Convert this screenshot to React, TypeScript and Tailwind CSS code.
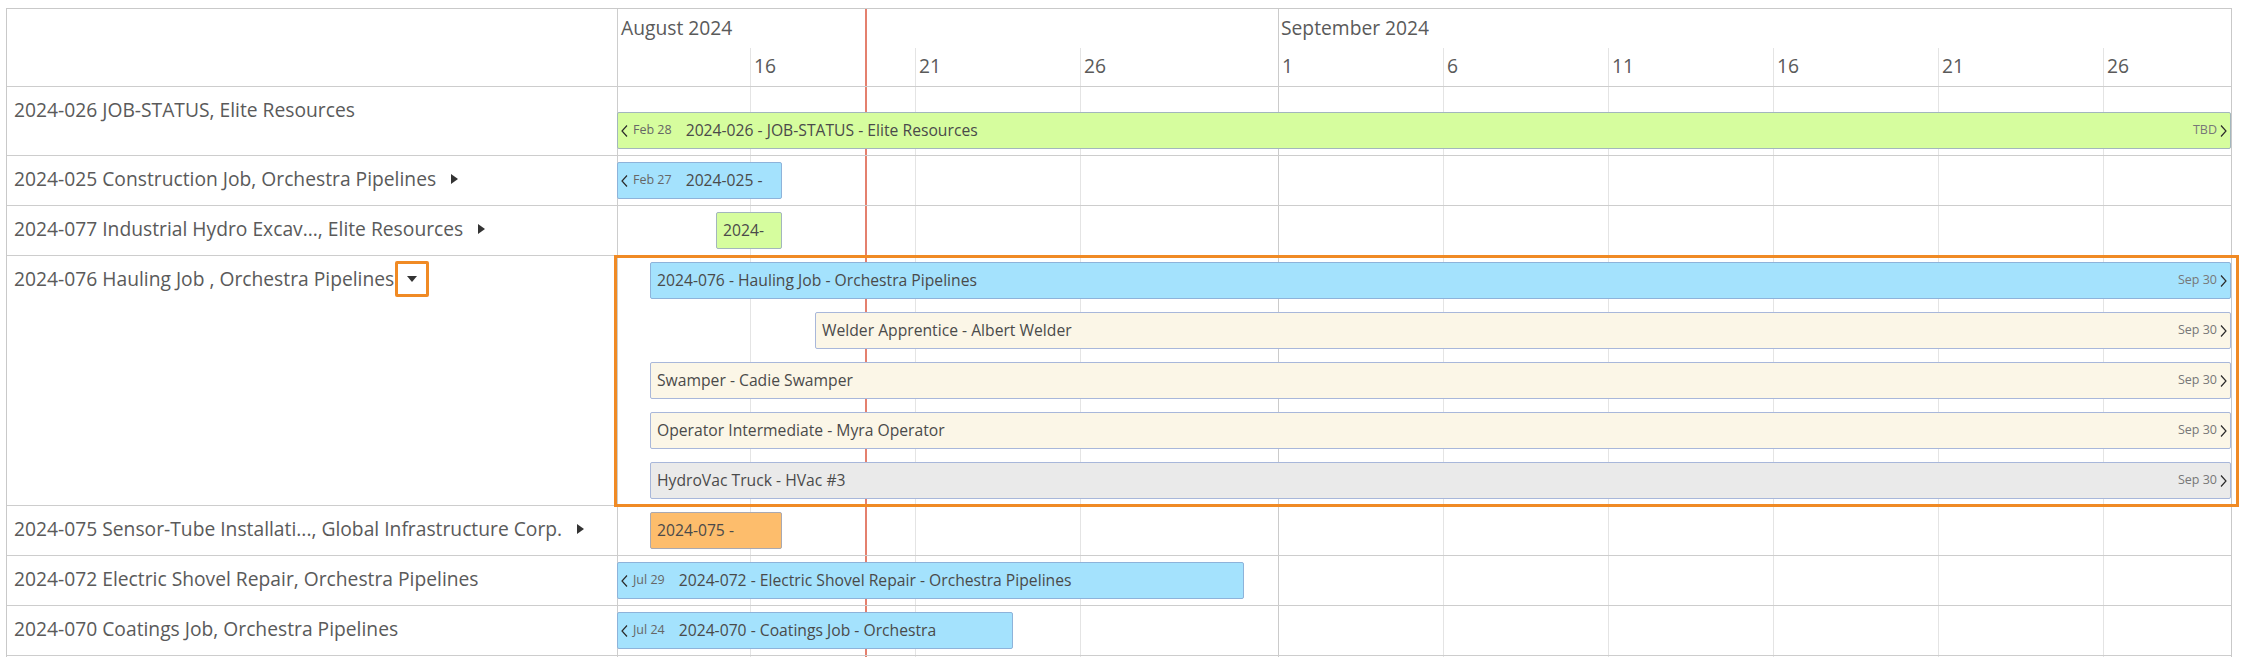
import type { ReactNode } from 'react'

const DAY = 33
const TIMELINE_W = 1613
const TODAY_X = 247

type Tone = 'green' | 'blue' | 'cream' | 'gray' | 'orange'

type BarData = {
  start: number
  days?: number
  label: string
  tone: Tone
  from?: string
  to?: string
}

type RowData = {
  label: string
  marker?: 'right' | 'open'
  height: string
  lanePad: string
  bars: BarData[]
  selected?: boolean
}

const toneClass: Record<Tone, string> = {
  green: 'bg-[#d6fd9e] border-[#a3b6bd]',
  blue: 'bg-[#a4e2fd] border-[#8eb3da]',
  cream: 'bg-[#fbf6e7] border-[#a8b7da]',
  gray: 'bg-[#eaeaea] border-[#a8b7da]',
  orange: 'bg-[#fdbd6c] border-[#a9a9b1]',
}

// grid ticks, x relative to the timeline origin (Aug 12)
const ticks = [
  { x: 132, day: '16' },
  { x: 297, day: '21' },
  { x: 462, day: '26' },
  { x: 660, day: '1', month: true },
  { x: 825, day: '6' },
  { x: 990, day: '11' },
  { x: 1155, day: '16' },
  { x: 1320, day: '21' },
  { x: 1485, day: '26' },
]

const rows: RowData[] = [
  {
    label: '2024-026 JOB-STATUS, Elite Resources',
    height: 'h-[69px]',
    lanePad: 'pt-[25px]',
    bars: [{ start: 0, label: '2024-026 - JOB-STATUS - Elite Resources', tone: 'green', from: 'Feb 28', to: 'TBD' }],
  },
  {
    label: '2024-025 Construction Job, Orchestra Pipelines',
    marker: 'right',
    height: 'h-[50px]',
    lanePad: 'pt-[6px]',
    bars: [{ start: 0, days: 5, label: '2024-025 -', tone: 'blue', from: 'Feb 27' }],
  },
  {
    label: '2024-077 Industrial Hydro Excav..., Elite Resources',
    marker: 'right',
    height: 'h-[50px]',
    lanePad: 'pt-[6px]',
    bars: [{ start: 3, days: 2, label: '2024-', tone: 'green' }],
  },
  {
    label: '2024-076 Hauling Job , Orchestra Pipelines',
    marker: 'open',
    height: 'h-[250px]',
    lanePad: 'pt-[6px]',
    selected: true,
    bars: [
      { start: 1, label: '2024-076 - Hauling Job - Orchestra Pipelines', tone: 'blue', to: 'Sep 30' },
      { start: 6, label: 'Welder Apprentice - Albert Welder', tone: 'cream', to: 'Sep 30' },
      { start: 1, label: 'Swamper - Cadie Swamper', tone: 'cream', to: 'Sep 30' },
      { start: 1, label: 'Operator Intermediate - Myra Operator', tone: 'cream', to: 'Sep 30' },
      { start: 1, label: 'HydroVac Truck - HVac #3', tone: 'gray', to: 'Sep 30' },
    ],
  },
  {
    label: '2024-075 Sensor-Tube Installati..., Global Infrastructure Corp.',
    marker: 'right',
    height: 'h-[50px]',
    lanePad: 'pt-[6px]',
    bars: [{ start: 1, days: 4, label: '2024-075 -', tone: 'orange' }],
  },
  {
    label: '2024-072 Electric Shovel Repair, Orchestra Pipelines',
    height: 'h-[50px]',
    lanePad: 'pt-[6px]',
    bars: [{ start: 0, days: 19, label: '2024-072 - Electric Shovel Repair - Orchestra Pipelines', tone: 'blue', from: 'Jul 29' }],
  },
  {
    label: '2024-070 Coatings Job, Orchestra Pipelines',
    height: 'h-[50px]',
    lanePad: 'pt-[6px]',
    bars: [{ start: 0, days: 12, label: '2024-070 - Coatings Job - Orchestra', tone: 'blue', from: 'Jul 24' }],
  },
  {
    label: '',
    height: 'h-[50px]',
    lanePad: 'pt-[6px]',
    bars: [],
  },
]

function Chevron({ dir }: { dir: 'left' | 'right' }) {
  return (
    <svg width="7" height="12" viewBox="0 0 7 12" className="shrink-0">
      <polyline
        points={dir === 'left' ? '6,0.5 1,6 6,11.5' : '1,0.5 6,6 1,11.5'}
        fill="none"
        stroke="#2b2b2b"
        strokeWidth="1.2"
      />
    </svg>
  )
}

function Bar({ bar }: { bar: BarData }) {
  const left = bar.start * DAY - 1
  const width = bar.days ? bar.days * DAY : TIMELINE_W - left

  return (
    <div
      className={`flex h-[37px] shrink-0 items-center overflow-hidden rounded-[2px] border pl-[3px] pr-[3px] whitespace-nowrap ${toneClass[bar.tone]}`}
      style={{ marginLeft: left, width }}
    >
      {bar.from && (
        <>
          <Chevron dir="left" />
          <span className="ml-[5px] text-[12.5px] text-[#666]">{bar.from}</span>
        </>
      )}
      <span className={`${bar.from ? 'ml-[14px]' : 'ml-[3px]'} text-[15.7px] text-[#4a4a4a]`}>{bar.label}</span>
      {bar.to && (
        <>
          <span className="ml-auto text-[12.5px] text-[#777]">{bar.to}</span>
          <span className="ml-[3px]">
            <Chevron dir="right" />
          </span>
        </>
      )}
    </div>
  )
}

function RowLabel({ row }: { row: RowData }) {
  let marker: ReactNode = null
  if (row.marker === 'right') {
    marker = (
      <svg width="7" height="10" viewBox="0 0 7 10" className="ml-[15px] shrink-0">
        <polygon points="0,0 7,5 0,10" fill="#333" />
      </svg>
    )
  } else if (row.marker === 'open') {
    marker = (
      <span className="-my-[4px] ml-[1px] flex h-[36px] w-[34px] items-center justify-center rounded-[2px] border-[3px] border-[#f08a24]">
        <svg width="10" height="6" viewBox="0 0 10 6">
          <polygon points="0,0 10,0 5,6" fill="#333" />
        </svg>
      </span>
    )
  }

  return (
    <div className={`border-b border-[#cdcdcd] pl-[7px] pt-[9px] ${row.height}`}>
      <div className="flex items-center leading-[28px] whitespace-nowrap">
        <span>{row.label}</span>
        {marker}
      </div>
    </div>
  )
}

function GridLayer() {
  return (
    <div className="pointer-events-none absolute inset-0">
      {ticks.map((t) => (
        <div
          key={t.x}
          className={`absolute bottom-0 w-px ${t.month ? 'top-0 bg-[#cbcbcb]' : 'top-[39px] bg-[#e4e4e4]'}`}
          style={{ left: t.x }}
        />
      ))}
      <div className="absolute top-0 bottom-0 w-[2px] bg-[#e4806e]" style={{ left: TODAY_X }} />
    </div>
  )
}

export default function App() {
  return (
    <div className="min-h-screen bg-white pt-[8px] pl-[6px] font-['Open_Sans',sans-serif] text-[19.25px] text-[#5a5a5a]">
      <div className="flex w-[2226px] border border-[#c9c9c9]">
        {/* job list */}
        <div className="w-[611px] shrink-0 border-r border-[#cdcdcd]">
          <div className="h-[78px] border-b border-[#cdcdcd]" />
          {rows.map((row, i) => (
            <RowLabel key={i} row={row} />
          ))}
        </div>

        {/* timeline */}
        <div className="relative flex-1">
          <GridLayer />

          <div className="relative h-[78px] border-b border-[#cdcdcd] leading-[28px]">
            <div className="flex h-[39px] pt-[5px]">
              <div className="w-[660px] shrink-0 pl-[3px]">August 2024</div>
              <div className="pl-[3px]">September 2024</div>
            </div>
            <div className="flex pt-[4px]">
              <div className="w-[132px] shrink-0" />
              {ticks.map((t, i) => (
                <div
                  key={t.x}
                  className="shrink-0 pl-[4px]"
                  style={{ width: (ticks[i + 1]?.x ?? TIMELINE_W) - t.x }}
                >
                  {t.day}
                </div>
              ))}
            </div>
          </div>

          {rows.map((row, i) => (
            <div key={i} className={`relative flex flex-col gap-[13px] border-b border-[#cdcdcd] ${row.height} ${row.lanePad}`}>
              {row.bars.map((bar, j) => (
                <Bar key={j} bar={bar} />
              ))}
              {row.selected && (
                <div className="absolute -top-[1px] -right-[8px] -bottom-[2px] -left-[4px] border-[3px] border-[#f08a24]" />
              )}
            </div>
          ))}
        </div>
      </div>
    </div>
  )
}
